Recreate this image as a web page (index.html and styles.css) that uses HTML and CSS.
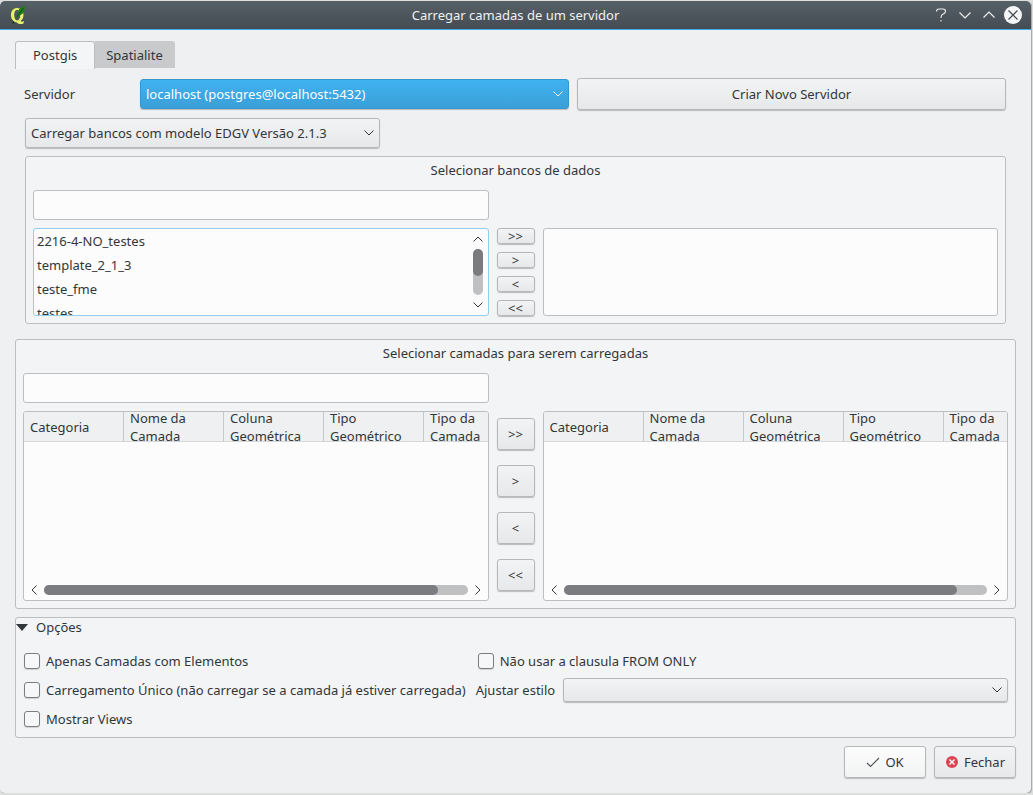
FILE: index.html
```html
<!DOCTYPE html>
<html lang="pt-BR">
<head>
<meta charset="utf-8">
<title>Carregar camadas de um servidor</title>
<link rel="stylesheet" href="styles.css">
</head>
<body>
<svg class="defs" aria-hidden="true">
  <symbol id="down" viewBox="0 0 12 12"><path d="M1.500 3.500 6 8l4.500-4.500" fill="none" stroke="currentColor" stroke-width="1"/></symbol>
  <symbol id="up" viewBox="0 0 12 12"><path d="M1.500 8.500 6 4l4.500 4.500" fill="none" stroke="currentColor" stroke-width="1"/></symbol>
  <symbol id="left" viewBox="0 0 12 12"><path d="M8.500 1.500 4 6l4.500 4.500" fill="none" stroke="currentColor" stroke-width="1"/></symbol>
  <symbol id="right" viewBox="0 0 12 12"><path d="M3.500 1.500 8 6l-4.500 4.500" fill="none" stroke="currentColor" stroke-width="1"/></symbol>
</svg>
<div class="window">
  <header class="titlebar">
    <svg class="logo" viewBox="0 0 18 20" aria-hidden="true">
      <path fill="#12330f" d="M2 14.500c1 .5 2 .3 3 1.500v2.500H3.600L4 16.500z"/>
      <path fill="#e9f36a" fill-rule="evenodd" d="M8 3C4.300 3 2 6 2 10s2.200 7 5.500 7.200C9 19 11 19.500 14.500 18.500l.5-2.500c-1.500 1-2.500.8-3.500 0C13.500 14.700 14.500 12.500 14.500 10 14.500 6 12 3 8 3zm.2 1.800c2 0 3 2.200 3 5.300s-1 5.300-3 5.300-3-2.300-3-5.300 1-5.300 3-5.300z"/>
      <path fill="#1d7d16" d="M15.800.2c.5 3.300-.2 6-1.700 7.800-1.300 1.500-3 2-4.600 3.200L8 12.500l-.8-.8L9 8.500c.2-3 1-4.500 2.500-5.500 1.400-1 2.900-1.200 4.300-2.800z"/>
      <path d="M14.500 3 8 12" stroke="#0b430b" stroke-width=".7"/>
    </svg>
    <h1>Carregar camadas de um servidor</h1>
    <div class="controls">
      <button aria-label="Ajuda"><svg viewBox="0 0 18 18"><path d="M4.500 5.500c0-1.500.8-2.500 2.500-2.500h4c1.700 0 2.500.8 2.500 2.300 0 2.200-1.500 2.400-2.800 3C9.500 8.800 9 9.500 9 12M9 14v1.500" fill="none" stroke="currentColor" stroke-width="1.100"/></svg></button>
      <button aria-label="Minimizar"><svg viewBox="0 0 18 18"><path d="m3.500 6.500 5.500 5.500 5.500-5.500" fill="none" stroke="currentColor" stroke-width="1.200"/></svg></button>
      <button aria-label="Maximizar"><svg viewBox="0 0 18 18"><path d="m3.500 11.500 5.500-5.500 5.500 5.500" fill="none" stroke="currentColor" stroke-width="1.200"/></svg></button>
      <button aria-label="Fechar janela"><svg viewBox="0 0 18 18"><circle cx="9" cy="9" r="9" fill="#f4f5f6"/><path d="m4.500 4.500 9 9m0-9-9 9" stroke="#434b52" stroke-width="1.200"/></svg></button>
    </div>
  </header>

  <main class="content">
    <div class="tabs" role="tablist">
      <button class="tab selected" role="tab" aria-selected="true">Postgis</button>
      <button class="tab" role="tab" aria-selected="false">Spatialite</button>
    </div>

    <section class="page" role="tabpanel" aria-label="Postgis">
      <div class="server-row">
        <label for="server">Servidor</label>
        <div class="combo highlighted">
          <select id="server"><option>localhost (postgres@localhost:5432)</option></select>
          <svg><use href="#down"/></svg>
        </div>
        <button class="btn">Criar Novo Servidor</button>
      </div>
      <div class="combo model">
        <select aria-label="Modelo"><option>Carregar bancos com modelo EDGV Versão 2.1.3</option></select>
        <svg><use href="#down"/></svg>
      </div>
      <section class="group transfer databases">
        <h2>Selecionar bancos de dados</h2>
        <input class="filter" type="text" aria-label="Filtrar bancos">
        <div class="list focused">
          <ul role="listbox" aria-label="Bancos disponíveis">
            <li role="option">2216-4-NO_testes</li>
            <li role="option">template_2_1_3</li>
            <li role="option">teste_fme</li>
            <li role="option">testes</li>
          </ul>
          <div class="vscroll"><svg><use href="#up"/></svg><div class="track"><div class="thumb"></div></div><svg><use href="#down"/></svg></div>
        </div>
        <div class="movers">
          <button class="btn">&gt;&gt;</button>
          <button class="btn">&gt;</button>
          <button class="btn">&lt;</button>
          <button class="btn">&lt;&lt;</button>
        </div>
        <div class="list"></div>
      </section>
    </section>

    <section class="group transfer layers">
      <h2>Selecionar camadas para serem carregadas</h2>
      <input class="filter" type="text" aria-label="Filtrar camadas">
      <div class="grid-view">
        <table>
          <thead><tr><th><div>Categoria</div></th><th><div>Nome da<br>Camada</div></th><th><div>Coluna<br>Geométrica</div></th><th><div>Tipo<br>Geométrico</div></th><th><div>Tipo da<br>Camada</div></th></tr></thead>
        </table>
        <div class="hscroll"><svg><use href="#left"/></svg><div class="track"><div class="thumb"></div></div><svg><use href="#right"/></svg></div>
      </div>
      <div class="movers">
        <button class="btn">&gt;&gt;</button>
        <button class="btn">&gt;</button>
        <button class="btn">&lt;</button>
        <button class="btn">&lt;&lt;</button>
      </div>
      <div class="grid-view">
        <table>
          <thead><tr><th><div>Categoria</div></th><th><div>Nome da<br>Camada</div></th><th><div>Coluna<br>Geométrica</div></th><th><div>Tipo<br>Geométrico</div></th><th><div>Tipo da<br>Camada</div></th></tr></thead>
        </table>
        <div class="hscroll"><svg><use href="#left"/></svg><div class="track"><div class="thumb"></div></div><svg><use href="#right"/></svg></div>
      </div>
    </section>

    <section class="group options">
      <h2><button class="collapse"><svg viewBox="0 0 12 7" aria-hidden="true"><path d="M0 0h12L6 7z" fill="#31363b"/></svg>Opções</button></h2>
      <div class="option-grid">
        <label class="check"><input type="checkbox">Apenas Camadas com Elementos</label>
        <label class="check"><input type="checkbox">Não usar a clausula FROM ONLY</label>
        <label class="check"><input type="checkbox">Carregamento Único (não carregar se a camada já estiver carregada)</label>
        <div class="style-row">
          <label for="style">Ajustar estilo</label>
          <div class="combo"><select id="style"><option></option></select><svg><use href="#down"/></svg></div>
        </div>
        <label class="check"><input type="checkbox">Mostrar Views</label>
      </div>
    </section>

    <footer class="actions">
      <button class="btn default"><svg viewBox="0 0 14 14" aria-hidden="true"><path d="m1 8 3.500 3.500L13 3" fill="none" stroke="#4d5257" stroke-width="1.100"/></svg>OK</button>
      <button class="btn"><svg viewBox="0 0 14 14" aria-hidden="true"><circle cx="7" cy="7" r="6" fill="#da4453"/><path d="m4.500 4.500 5 5m0-5-5 5" stroke="#fff" stroke-width="1.400"/></svg>Fechar</button>
    </footer>
  </main>
</div>
</body>
</html>
```
FILE: styles.css
```css
* { box-sizing: border-box; }

body {
  margin: 0;
  background: #dcdddd;
  color: #31363b;
  font: 13px/18px "Noto Sans", sans-serif;
}

button, input, select {
  margin: 0;
  font: inherit;
  color: inherit;
}

h1, h2 {
  margin: 0;
  font-size: 13px;
  font-weight: 400;
}

svg { display: block; flex: none; }
.defs { display: none; }

.window {
  display: flex;
  flex-direction: column;
  min-height: calc(100vh - 2px);
  margin: 0 2px 0 0;
  border-top: 1px solid #dcdddd;
  border-radius: 5px;
  background: #eff0f1;
  box-shadow: 1px 1px 0 #a9abac;
}

.titlebar {
  display: grid;
  grid-template-columns: 1fr auto 1fr;
  align-items: center;
  height: 29px;
  padding: 0 9px;
  border-bottom: 1px solid #3daee9;
  border-radius: 5px 5px 0 0;
  background: linear-gradient(#566067, #454c53);
  color: #eff0f1;
}

.logo { width: 18px; height: 20px; }

.controls {
  display: flex;
  justify-content: flex-end;
  gap: 6px;
}

.controls button {
  width: 18px;
  height: 18px;
  padding: 0;
  border: 0;
  background: none;
}

.content {
  display: flex;
  flex: 1;
  flex-direction: column;
  padding: 11px 15px 15px;
}

.tabs { display: flex; align-items: flex-start; }

.tab {
  height: 27px;
  padding: 0 12px 0 11px;
  border: 0;
  border-radius: 0 3px 0 0;
  background: #c9cacb;
}

.tab.selected {
  height: 28px;
  padding: 0 17px 2px;
  border: 1px solid #bcbec0;
  border-bottom: 0;
  border-radius: 3px 3px 0 0;
  background: #f4f5f6;
}

.page { padding: 9px 10px 0; }

.btn, .combo select {
  border: 1px solid #b5b7b9;
  border-radius: 3px;
  background: linear-gradient(#f2f3f4, #e7e8e9);
  box-shadow: 0 1px 1px #b9bbbd;
}

.btn { padding: 0; }

.server-row {
  display: grid;
  grid-template-columns: 107px 1fr 1fr;
  gap: 8px;
  align-items: center;
  height: 32px;
}

.server-row .btn { height: 32px; }
.server-row label { margin-left: -1px; }

.combo { position: relative; height: 30px; }

.combo select {
  appearance: none;
  width: 100%;
  height: 100%;
  padding: 0 28px 0 5px;
}

.combo svg {
  position: absolute;
  top: 50%;
  right: 5px;
  width: 12px;
  height: 12px;
  margin-top: -6px;
  pointer-events: none;
}

.highlighted { color: #fcfcfc; }

.highlighted select {
  border-color: #3498cf;
  background: linear-gradient(#40b2f0, #3a9fd8);
}

.model { width: 355px; margin-top: 8px; }

.group {
  border: 1px solid #bcbec0;
  border-radius: 3px;
  background: #f3f4f6;
}

.transfer {
  display: grid;
  grid-template-columns: minmax(0, 1fr) 38px minmax(0, 1fr);
  column-gap: 8px;
  padding: 4px 7px 7px;
}

.transfer h2 { grid-column: 1 / -1; text-align: center; }

.filter {
  grid-column: 1;
  height: 30px;
  margin: 11px 0 8px;
  padding: 0 5px;
  border: 1px solid #bcbec0;
  border-radius: 3px;
  background: #fcfcfc;
}

.list, .movers { grid-row: 3; }

.databases { margin-top: 8px; }

.list {
  display: flex;
  height: 88px;
  overflow: hidden;
  border: 1px solid #bcbec0;
  border-radius: 3px;
  background: #fcfcfc;
}

.focused { border-color: #8fcfec; }

.list ul {
  flex: 1;
  margin: 0;
  padding: 0 3px;
  list-style: none;
}

.list li { height: 24px; line-height: 24px; }

.vscroll {
  display: flex;
  flex-direction: column;
  align-items: center;
  gap: 4px;
  width: 20px;
  padding: 4px 0;
}

.vscroll svg, .hscroll svg { width: 12px; height: 12px; }

.track { flex: 1; border-radius: 5px; background: #bfc0c2; }
.thumb { border-radius: 5px; background: #7b7c7f; }
.vscroll .track { width: 10px; }
.vscroll .thumb { height: 27px; }

.movers {
  display: flex;
  flex-direction: column;
  justify-content: space-between;
}

.databases .btn { height: 16px; line-height: 14px; }

.layers {
  flex: 1;
  grid-template-rows: auto auto 1fr;
  margin-top: 15px;
}

.layers .movers { padding: 7px 0 10px; }
.layers .movers .btn { height: 32px; }

.grid-view {
  display: flex;
  grid-row: 3;
  flex-direction: column;
  justify-content: space-between;
  overflow: hidden;
  border: 1px solid #bcbec0;
  border-radius: 3px;
  background: #fcfcfc;
}

.grid-view table {
  width: 500px;
  table-layout: fixed;
  border-spacing: 0;
}

.grid-view th {
  padding: 0;
  border-right: 1px solid #c6c8c9;
  border-bottom: 1px solid #d5d6d8;
  background: #eff0f1;
  font-weight: 400;
  text-align: left;
}

.grid-view th div {
  display: flex;
  align-items: center;
  height: 29px;
  padding-left: 6px;
  overflow: hidden;
}

.hscroll {
  display: flex;
  align-items: center;
  gap: 4px;
  height: 20px;
  padding: 0 4px;
}

.hscroll .track { height: 10px; }
.hscroll .thumb { width: 93%; height: 10px; }

.options { margin-top: 8px; padding: 0 7px 6px 0; }

.collapse {
  display: flex;
  align-items: center;
  gap: 8px;
  padding: 0;
  border: 0;
  background: none;
}

.collapse svg { width: 12px; height: 7px; }

.option-grid {
  display: grid;
  grid-template-columns: auto 1fr;
  gap: 5px 10px;
  align-items: center;
  margin-top: 13px;
  padding-left: 6px;
}

.check {
  display: flex;
  align-items: center;
  gap: 6px;
  height: 24px;
  padding-left: 2px;
}

.check input {
  appearance: none;
  width: 16px;
  height: 16px;
  border: 1px solid #7b7e81;
  border-radius: 3px;
  background: #f6f7f8;
  box-shadow: 0 1px 1px #cfd1d2;
}

.style-row { display: flex; align-items: center; gap: 8px; }
.style-row .combo { flex: 1; height: 24px; }

.actions {
  display: flex;
  justify-content: flex-end;
  gap: 8px;
  margin-top: 8px;
}

.actions .btn {
  display: flex;
  align-items: center;
  justify-content: center;
  gap: 5px;
  width: 82px;
  height: 32px;
}

.actions .default { background: linear-gradient(#fcfcfc, #f2f3f3); }
.actions svg { width: 14px; height: 14px; }
```
